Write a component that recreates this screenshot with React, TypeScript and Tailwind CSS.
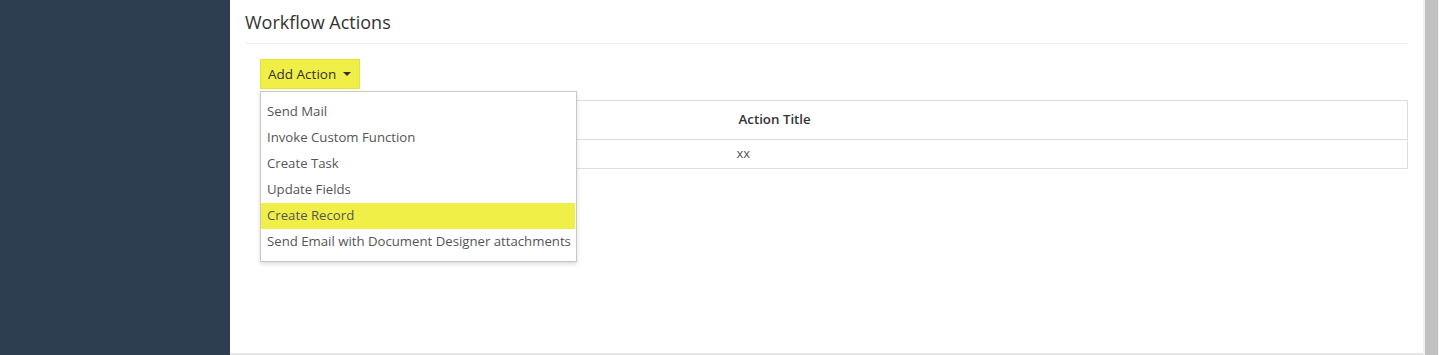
import React from "react";

const actions = [
  "Send Mail",
  "Invoke Custom Function",
  "Create Task",
  "Update Fields",
  "Create Record",
  "Send Email with Document Designer attachments",
];

export default function App() {
  return (
    <div className="flex h-[355px] w-full overflow-hidden font-['Open_Sans',sans-serif] text-[#333]">
      {/* sidebar */}
      <aside className="w-[230px] shrink-0 bg-[#2c3e50]" />

      {/* main panel */}
      <main className="flex-1 bg-white border-b-2 border-[#e6e6e6]">
        <div className="px-[15px]">
          <h2 className="pt-[9px] pb-[8px] text-[18px] leading-[26px] font-normal text-[#333] border-b border-[#eee]">
            Workflow Actions
          </h2>

          <div className="pl-[15px] pt-[15px]">
            <div className="relative">
              <button className="flex h-[30px] items-center gap-[7px] pl-[7px] pr-[8px] bg-[#f0ef48] border border-[#e3e23a] text-[13.5px] text-[#333] font-medium">
                Add Action
                <span className="h-0 w-0 border-x-[4px] border-x-transparent border-t-[4px] border-t-[#333]" />
              </button>

              {/* dropdown menu */}
              <ul className="absolute left-0 top-[32px] z-10 w-[317px] pt-[7px] pb-[6px] bg-white border border-[#c8c8c8] shadow-[0_2px_4px_rgba(0,0,0,0.15)]">
                {actions.map((a) => (
                  <li
                    key={a}
                    className={`h-[26px] pl-[6px] flex items-center text-[13.2px] text-[#555] whitespace-nowrap ${
                      a === "Create Record" ? "bg-[#f0ef48] mr-[1px]" : ""
                    }`}
                  >
                    {a}
                  </li>
                ))}
              </ul>

              <table className="mt-[11px] w-full border-collapse border border-[#ddd] text-[13px]">
                <thead>
                  <tr className="h-[39px] border-b border-[#ddd]">
                    <th className="w-[469px] px-[8px] text-left font-semibold" />
                    <th className="px-[9px] text-left font-semibold text-[13.3px] text-[#333]">Action Title</th>
                  </tr>
                </thead>
                <tbody>
                  <tr className="h-[29px]">
                    <td className="px-[8px]" />
                    <td className="px-[7px] text-[#555]">xx</td>
                  </tr>
                </tbody>
              </table>
            </div>
          </div>
        </div>
      </main>

      {/* scrollbar */}
      <div className="w-[16px] shrink-0 bg-[#f1f1f1] pl-[2px] pr-[1px]">
        <div className="h-full bg-[#c1c1c1]" />
      </div>
    </div>
  );
}
